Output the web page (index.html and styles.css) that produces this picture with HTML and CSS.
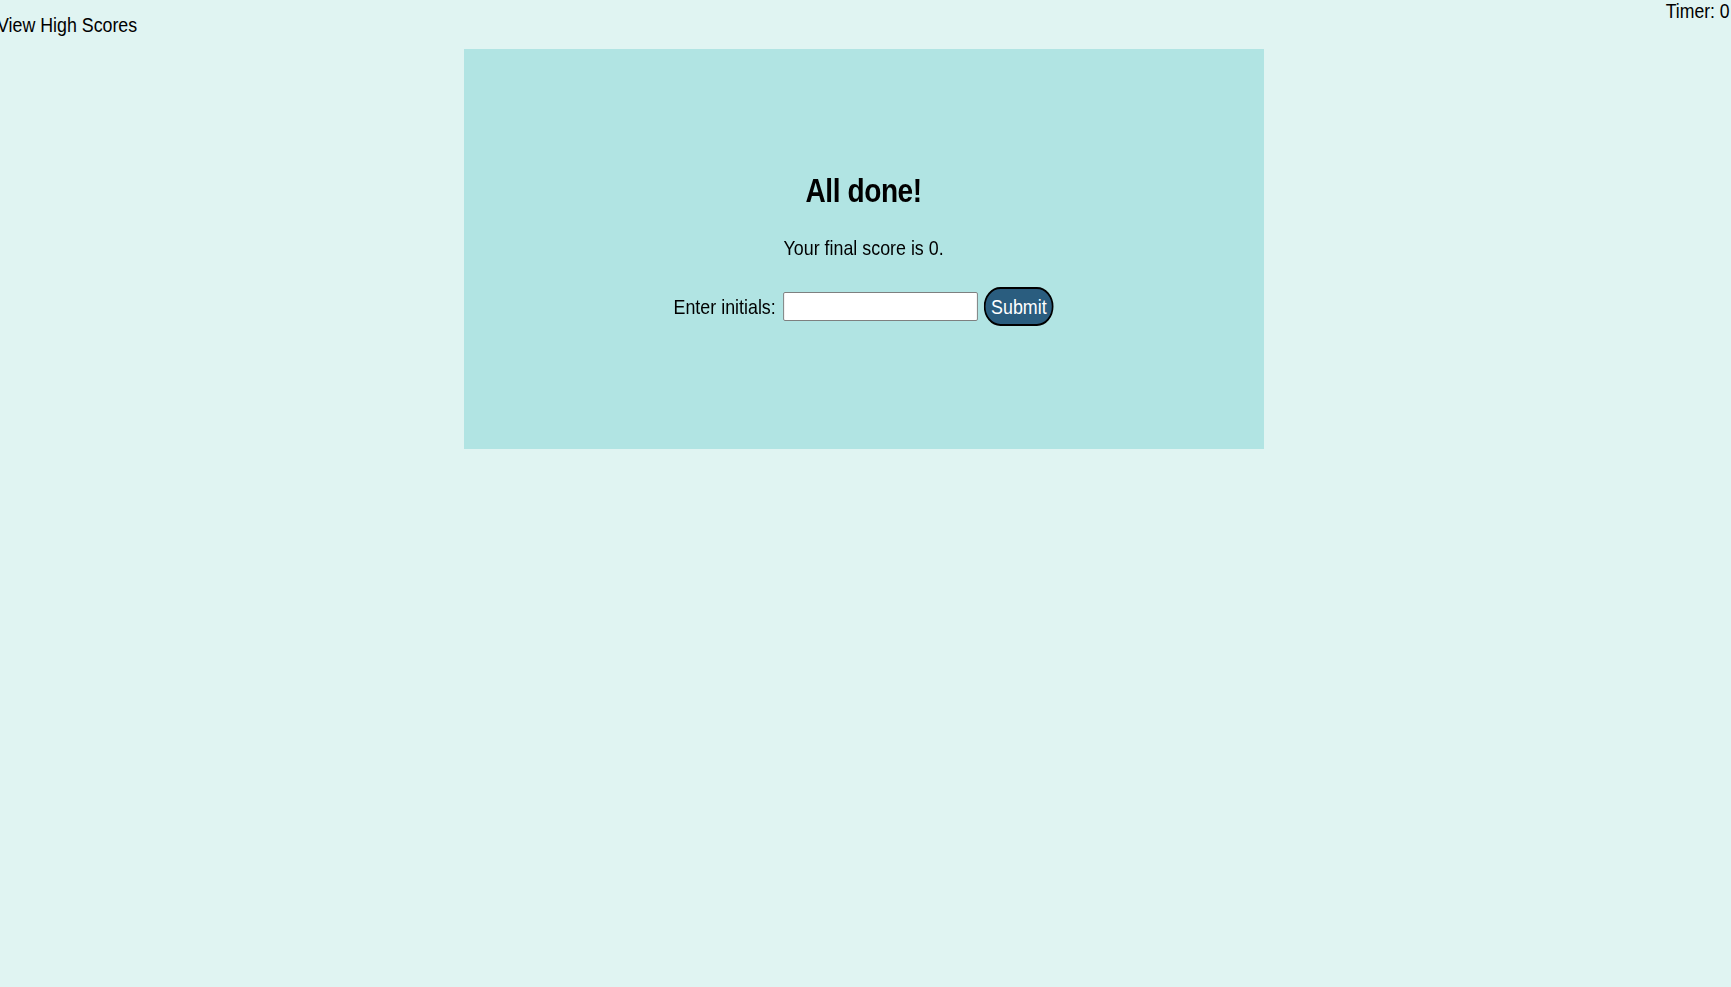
FILE: index.html
```html
<!DOCTYPE html>
<html>
<head>
<meta charset="utf-8">
<title>Quiz</title>
<link rel="stylesheet" href="styles.css">
</head>
<body>
<header class="top-bar">
  <a class="scores-link" href="#">View High Scores</a>
  <div class="timer">Timer: 0</div>
</header>
<div class="stage">
  <main class="card">
    <div class="card-content">
      <h1 class="title">All done!</h1>
      <p class="score">Your final score is 0.</p>
      <form class="initials-form">
        <label class="initials-label" for="initials">Enter initials:</label>
        <input class="initials-input" id="initials" type="text">
        <button class="submit-btn" type="button">Submit</button>
      </form>
    </div>
  </main>
</div>
</body>
</html>
```
FILE: styles.css
```css
html, body {
  margin: 0;
  padding: 0;
}
body {
  background: #e0f4f2;
  font-family: "Liberation Sans Narrow", "Liberation Sans", Arial, sans-serif;
  color: #000;
  font-size: 20px;
  min-height: 987px;
  overflow: hidden;
}
.top-bar {
  display: flex;
  justify-content: space-between;
  align-items: flex-start;
  height: 49px;
}
.scores-link {
  display: inline-block;
  color: #000;
  text-decoration: none;
  margin-left: -3px;
  margin-top: 14px;
  line-height: 23px;
  transform: scaleX(0.89);
  transform-origin: left center;
}
.timer {
  line-height: 23px;
  margin-right: 1px;
  transform: scaleX(0.88);
  transform-origin: right center;
}
.stage {
  padding-right: 3px;
}
.card {
  width: 800px;
  height: 400px;
  margin: 0 auto;
  background: #b1e4e3;
  display: flex;
  flex-direction: column;
  align-items: center;
  justify-content: center;
}
.card-content {
  display: flex;
  flex-direction: column;
  align-items: center;
  transform: scaleX(0.85);
  transform-origin: center center;
}
.title {
  font-size: 33px;
  font-weight: bold;
  letter-spacing: -0.5px;
  margin: 0 0 27px;
  line-height: 37px;
}
.score {
  font-size: 21px;
  margin: 0 0 27px;
  line-height: 24px;
}
.initials-form {
  display: flex;
  align-items: center;
}
.initials-label {
  font-size: 21px;
  margin-right: 9px;
}
.initials-input {
  width: 225px;
  height: 25px;
  padding: 1px 1px;
  border: 1px solid #767676;
  border-radius: 2px;
  background: #fff;
  box-sizing: content-box;
  margin: 0 7px 0 0;
}
.submit-btn {
  font-family: inherit;
  font-size: 21px;
  color: #fff;
  background: #2a5d7f;
  border: 2px solid #000;
  border-radius: 20px;
  width: 82px;
  height: 39px;
  padding: 0;
  margin: 0;
}
```
